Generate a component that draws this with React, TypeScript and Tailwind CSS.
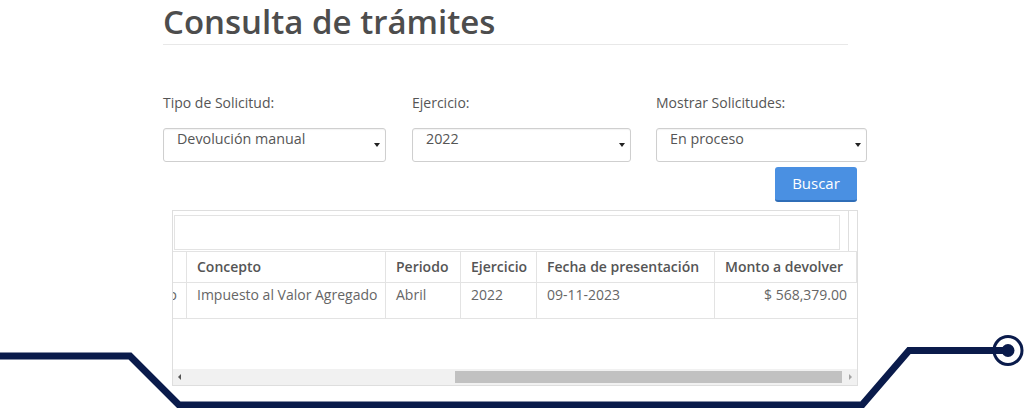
const columns = [
  { label: "Concepto", value: "Impuesto al Valor Agregado" },
  { label: "Periodo", value: "Abril" },
  { label: "Ejercicio", value: "2022" },
  { label: "Fecha de presentación", value: "09-11-2023" },
  { label: "Monto a devolver", value: "$ 568,379.00", right: true },
];

const filters = [
  { label: "Tipo de Solicitud:", value: "Devolución manual", cls: "w-[223px]" },
  { label: "Ejercicio:", value: "2022", cls: "w-[219px] ml-[26px]" },
  { label: "Mostrar Solicitudes:", value: "En proceso", cls: "w-[211px] ml-[25px]" },
];

const ConsultaTramites = () => {
  return (
    <div className="relative w-[1024px] h-[408px] overflow-hidden bg-white font-['Open_Sans',sans-serif] text-[#555]">
      <div className="ml-[163px] w-[705px]">
        {/* Title */}
        <h1 className="w-[685px] border-b border-[#e8e8e8] text-[33px] font-semibold leading-[44px] text-[#4d4d4d]">
          Consulta de trámites
        </h1>

        {/* Filters */}
        <div className="mt-[48px] flex">
          {filters.map((f) => (
            <div key={f.label} className={f.cls}>
              <div className="mb-[15px] text-[14px] leading-[20px]">{f.label}</div>
              <div className="relative h-[34px] rounded-[3px] border border-[#cfcfcf] pl-[13px] text-[14.3px] leading-[20px] shadow-[inset_0_1px_1px_rgba(0,0,0,0.05)]">
                {f.value}
                <span className="absolute right-[5px] top-[14px] h-0 w-0 border-x-[3px] border-t-[4px] border-x-transparent border-t-[#222]"></span>
              </div>
            </div>
          ))}
        </div>

        <div className="mt-[5px] flex justify-end pr-[11px]">
          <button className="h-[35px] w-[82px] rounded-[3px] border-b-2 border-[#2f6db7] bg-[#4a90e2] text-[15px] text-white">
            Buscar
          </button>
        </div>

        {/* Table */}
        <div className="ml-[9px] mt-[8px] flex h-[176px] w-[686px] flex-col border border-[#dedede]">
          <div className="flex h-[40px]">
            <div className="ml-[1px] mt-[4px] h-[35px] w-[666px] border border-[#e3e3e3]"></div>
            <div className="ml-[8px] h-[40px] w-px bg-[#dedede]"></div>
          </div>

          <div className="grid grid-cols-[14px_199px_75px_76px_178px_142px] border-t border-[#e3e3e3] text-[14px] leading-[20px]">
            <div className="border-r border-b border-[#e3e3e3]"></div>
            {columns.map((c) => (
              <div
                key={c.label}
                className="border-r border-b border-[#e3e3e3] px-[10px] pt-[5px] pb-[5px] font-semibold whitespace-nowrap last:border-r-0"
              >
                {c.label}
              </div>
            ))}
            <div className="flex justify-end overflow-hidden border-r border-b border-[#e3e3e3] pr-[9px] pt-[2px] text-[#666]">
              o
            </div>
            {columns.map((c) => (
              <div
                key={c.label}
                className={`h-[36px] border-r border-b border-[#e3e3e3] px-[10px] pt-[2px] text-[#666] whitespace-nowrap last:border-r-0 ${c.right ? "text-right" : ""}`}
              >
                {c.value}
              </div>
            ))}
          </div>

          <div className="flex-1"></div>

          {/* Scrollbar */}
          <div className="flex h-[16px] items-center bg-[#f1f1f1]">
            <span className="ml-[5px] h-0 w-0 border-y-[3px] border-r-[3px] border-y-transparent border-r-[#555]"></span>
            <div className="ml-[274px] h-[12px] w-[387px] bg-[#c1c1c1]"></div>
            <span className="ml-[7px] h-0 w-0 border-y-[3px] border-l-[3px] border-y-transparent border-l-[#a3a3a3]"></span>
          </div>
        </div>
      </div>

      {/* Decorative circuit line */}
      <svg
        className="pointer-events-none absolute inset-0"
        width="1024"
        height="408"
        viewBox="0 0 1024 408"
      >
        <path
          d="M0 356 H130 L179 405 H862 L909 350.5 H1004"
          fill="none"
          stroke="#0a1b4b"
          strokeWidth="7"
        />
        <circle cx="1008" cy="350.5" r="14" fill="none" stroke="#0a1b4b" strokeWidth="3" />
        <circle cx="1008" cy="350.5" r="6.5" fill="#0a1b4b" />
      </svg>
    </div>
  );
};

export default ConsultaTramites;
